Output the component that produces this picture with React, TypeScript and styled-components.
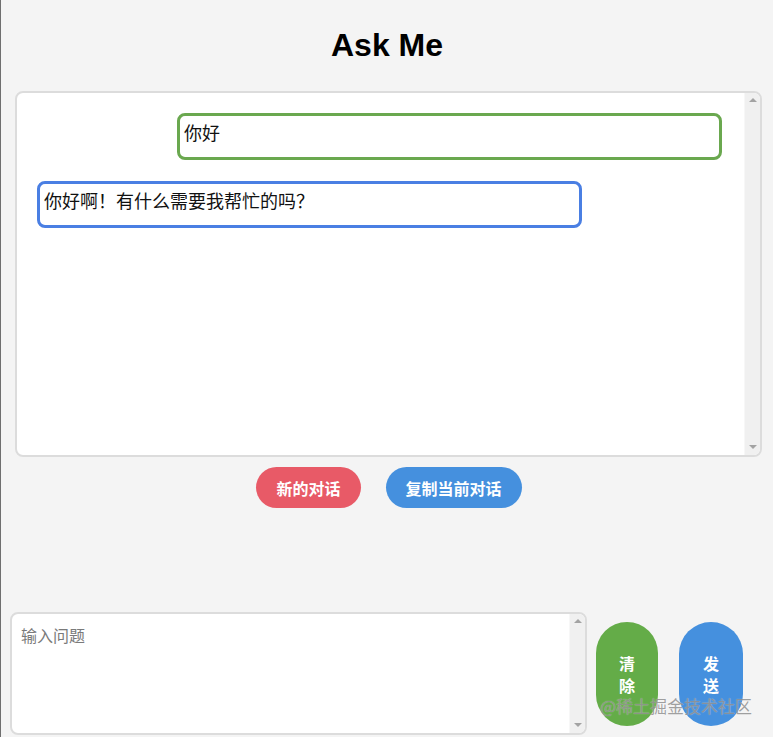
import React, { useState } from "react";
import styled, { createGlobalStyle } from "styled-components";

const GlobalStyle = createGlobalStyle`
  html, body {
    margin: 0;
    padding: 0;
    background: #f4f4f4;
  }
  * {
    box-sizing: border-box;
  }
`;

const Page = styled.div`
  position: relative;
  min-height: 100vh;
  display: flex;
  flex-direction: column;
  border-left: 1px solid #6f6f6f;
  font-family: "Liberation Sans", "Noto Sans CJK SC", sans-serif;
`;

const Title = styled.h1`
  margin: 0;
  padding: 27px 0 0;
  height: 91px;
  text-align: center;
  font-size: 32px;
  line-height: 37px;
  font-weight: 700;
  color: #000;
`;

// box with a classic scrollbar rail on its right side
const Frame = styled.div<{ $h: number }>`
  display: flex;
  height: ${(p) => p.$h}px;
  background: #fff;
  border: 2px solid #dcdcdc;
  border-radius: 8px;
  overflow: hidden;
`;

const ChatFrame = styled(Frame)`
  margin: 0 11px 0 14px;
`;

const ChatScroll = styled.div`
  flex: 1;
  overflow: hidden;
  padding: 20px 22px 20px 20px;
  display: flex;
  flex-direction: column;
  gap: 21px;
`;

const Rail = styled.div`
  width: 16px;
  flex-shrink: 0;
  background: #f0f0f0;
  border-left: 1px solid #f7f7f7;
  display: flex;
  flex-direction: column;
  justify-content: space-between;
  align-items: center;
  padding: 5px 0 6px;
`;

const Arrow = styled.span<{ $down?: boolean }>`
  width: 0;
  height: 0;
  border-left: 4px solid transparent;
  border-right: 4px solid transparent;
  ${(p) =>
    p.$down ? "border-top: 4px solid #a3a3a3;" : "border-bottom: 4px solid #a3a3a3;"}
`;

const Bubble = styled.div<{ $mine?: boolean }>`
  width: 545px;
  min-height: 47px;
  flex-shrink: 0;
  align-self: ${(p) => (p.$mine ? "flex-end" : "flex-start")};
  border: 3px solid ${(p) => (p.$mine ? "#6aa84f" : "#4a7fe3")};
  border-radius: 8px;
  padding: 4px 4px;
  font-family: "Noto Sans CJK SC", sans-serif;
  font-size: 18px;
  line-height: 24px;
  color: #111;
`;

const ActionRow = styled.div`
  display: flex;
  justify-content: center;
  gap: 25px;
  margin-top: 10px;
  padding-left: 4px;
`;

const Pill = styled.button<{ $color: string }>`
  height: 41px;
  padding: 0 20px;
  border: none;
  border-radius: 21px;
  background: ${(p) => p.$color};
  color: #fff;
  font-family: "Noto Sans CJK SC", sans-serif;
  font-weight: 700;
  font-size: 16px;
  cursor: pointer;
`;

const Composer = styled.div`
  margin-top: auto;
  display: flex;
  align-items: center;
  padding: 0 0 2px 9px;
`;

const InputFrame = styled(Frame)`
  width: 577px;
`;

const Input = styled.textarea`
  flex: 1;
  border: none;
  background: transparent;
  padding: 10px 9px;
  resize: none;
  overflow: hidden;
  font-family: "Noto Sans CJK SC", sans-serif;
  font-size: 16px;
  line-height: 22px;
  outline: none;
  &::placeholder {
    color: #7a7a7a;
  }
`;

const SideButtons = styled.div`
  display: flex;
  gap: 21px;
  margin-left: 9px;
`;

const TallButton = styled.button<{ $color: string; $w: number }>`
  width: ${(p) => p.$w}px;
  height: 104px;
  padding: 0 18px;
  border: none;
  border-radius: 32px;
  background: ${(p) => p.$color};
  color: #fff;
  font-family: "Noto Sans CJK SC", sans-serif;
  font-weight: 700;
  font-size: 16px;
  line-height: 22px;
  cursor: pointer;
`;

const Watermark = styled.span`
  position: absolute;
  right: 21px;
  bottom: 19px;
  font-family: "Noto Sans CJK SC", sans-serif;
  font-size: 17px;
  color: rgba(125, 125, 125, 0.72);
  text-shadow: 0 0 1px rgba(255, 255, 255, 0.6);
  pointer-events: none;
`;

const messages = [
  { id: 1, mine: true, text: "你好" },
  { id: 2, mine: false, text: "你好啊！有什么需要我帮忙的吗？" },
];

const ScrollRail = () => (
  <Rail>
    <Arrow />
    <Arrow $down />
  </Rail>
);

export default function App() {
  const [question, setQuestion] = useState("");
  return (
    <>
      <GlobalStyle />
      <Page>
        <Title>Ask Me</Title>
        <ChatFrame $h={366}>
          <ChatScroll>
            {messages.map((m) => (
              <Bubble key={m.id} $mine={m.mine}>
                {m.text}
              </Bubble>
            ))}
          </ChatScroll>
          <ScrollRail />
        </ChatFrame>
        <ActionRow>
          <Pill $color="#e85a67">新的对话</Pill>
          <Pill $color="#4590de">复制当前对话</Pill>
        </ActionRow>
        <Composer>
          <InputFrame $h={123}>
            <Input
              placeholder="输入问题"
              value={question}
              onChange={(e) => setQuestion(e.target.value)}
            />
            <ScrollRail />
          </InputFrame>
          <SideButtons>
            <TallButton $color="#64ac48" $w={62}>清除</TallButton>
            <TallButton $color="#4590de" $w={64}>发送</TallButton>
          </SideButtons>
        </Composer>
        <Watermark>@稀土掘金技术社区</Watermark>
      </Page>
    </>
  );
}
